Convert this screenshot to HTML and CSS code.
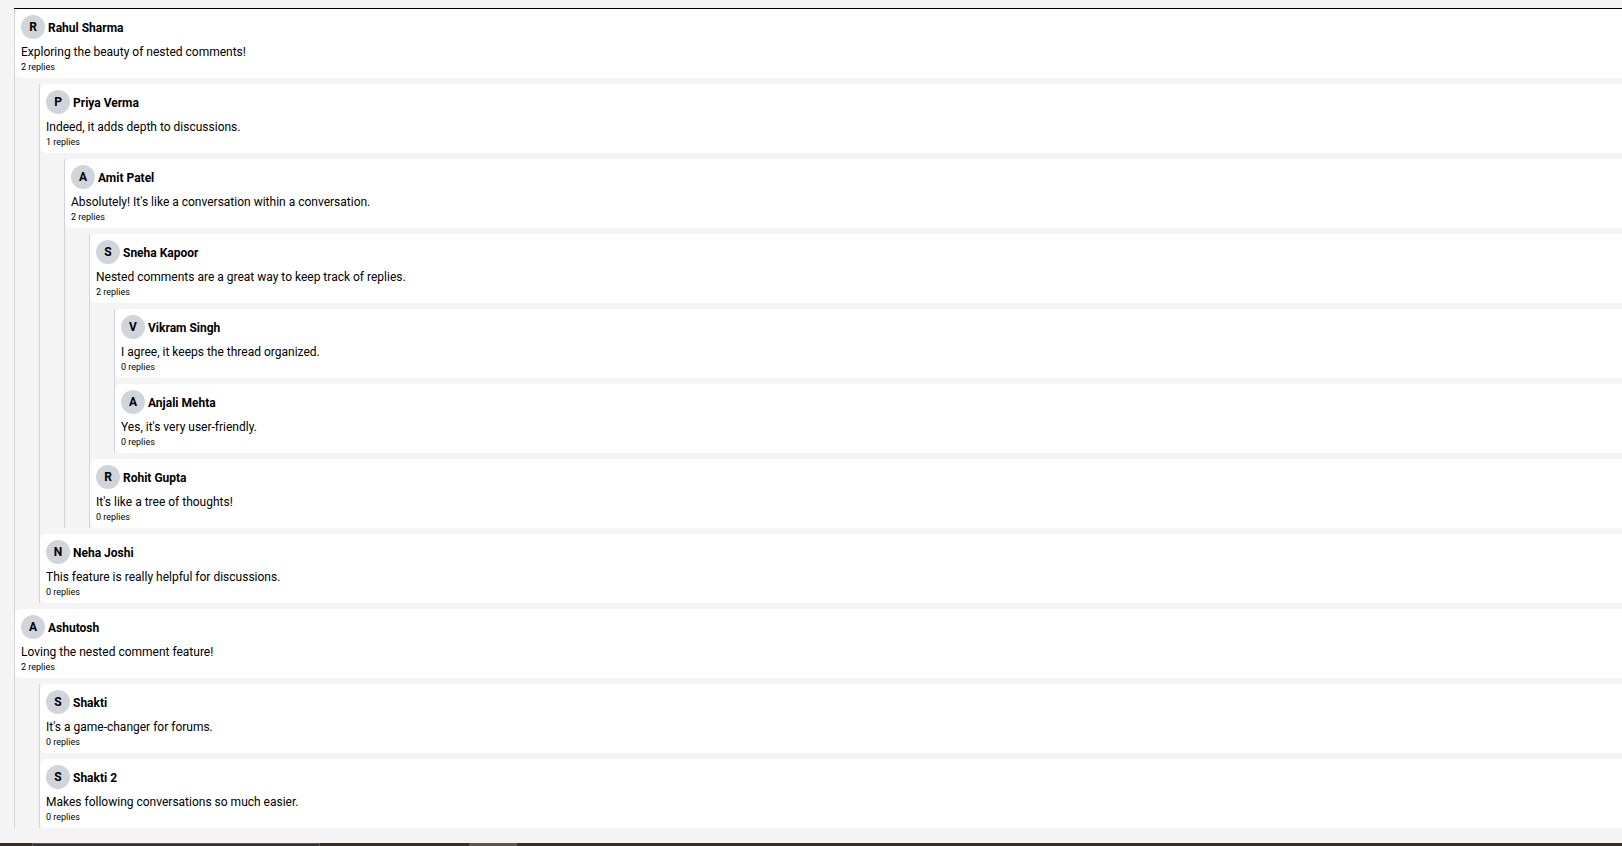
FILE: index.html
```
<!DOCTYPE html>
<html lang="en">

<head>
    <meta charset="UTF-8">
    <meta name="viewport" content="width=device-width, initial-scale=1.0">
    <title>Nested Comments</title>
    <link rel="stylesheet" href="styles.css">
</head>

<body>

    <main class="comments" id="comments"></main>

    <div class="taskbar">
        <div class="taskbar-search"></div>
        <div class="taskbar-active"></div>
    </div>

    <script src="script.js"></script>
</body>

</html>
```

FILE: styles.css
```
/* Basic styling */
* {
    box-sizing: border-box;
}

body {
    display: flex;
    flex-direction: column;
    min-height: 100vh;
    margin: 0;
    font-family: "Segoe UI", Roboto, "Open Sans", sans-serif;
    font-size: 12px;
    line-height: 18px;
    color: #000;
    background-color: #f4f4f4;
}

p {
    margin: 0;
}

.comments {
    margin: 8px 0 12px 14px;
    border-top: 1px solid #000;
}

/* Comment tree */
.thread {
    display: flex;
    flex-direction: column;
    gap: 6px;
    margin: 0;
    padding: 0;
    list-style: none;
    border-left: 1px solid #d1d5db;
}

.thread .thread {
    margin: 6px 0 0 24px;
}

.card {
    padding: 6px 6px 5px;
    border-radius: 6px 0 0 6px;
    background-color: #fff;
}

.card-header {
    display: flex;
    align-items: center;
    gap: 3px;
    margin-bottom: 4px;
    font-weight: bold;
}

.avatar {
    width: 24px;
    border-radius: 50%;
    line-height: 24px;
    text-align: center;
    background-color: #d1d5db;
}

.name {
    padding-top: 1px;
}

.replies {
    font-size: 9px;
    line-height: 12px;
}

/* Taskbar */
.taskbar {
    display: flex;
    height: 3px;
    margin-top: auto;
    background-color: #382d27;
}

.taskbar-search {
    width: 288px;
    margin-left: 32px;
    border: 1px solid #5c5753;
    border-bottom: none;
    background-color: #35302d;
}

.taskbar-active {
    width: 48px;
    margin-left: 149px;
    background-color: #5e544e;
}
```

FILE: script.js
```
const comments = [
    {
        name: 'Rahul Sharma', text: 'Exploring the beauty of nested comments!', replies: [
            {
                name: 'Priya Verma', text: 'Indeed, it adds depth to discussions.', replies: [
                    {
                        name: 'Amit Patel', text: "Absolutely! It's like a conversation within a conversation.", replies: [
                            {
                                name: 'Sneha Kapoor', text: 'Nested comments are a great way to keep track of replies.', replies: [
                                    { name: 'Vikram Singh', text: 'I agree, it keeps the thread organized.', replies: [] },
                                    { name: 'Anjali Mehta', text: "Yes, it's very user-friendly.", replies: [] }
                                ]
                            },
                            { name: 'Rohit Gupta', text: "It's like a tree of thoughts!", replies: [] }
                        ]
                    }
                ]
            },
            { name: 'Neha Joshi', text: 'This feature is really helpful for discussions.', replies: [] }
        ]
    },
    {
        name: 'Ashutosh', text: 'Loving the nested comment feature!', replies: [
            { name: 'Shakti', text: "It's a game-changer for forums.", replies: [] },
            { name: 'Shakti 2', text: 'Makes following conversations so much easier.', replies: [] }
        ]
    }
];

function addElement(parent, tag, className, text) {
    const element = document.createElement(tag);
    element.className = className;
    if (text) {
        element.textContent = text;
    }
    parent.appendChild(element);
    return element;
}

// Renders a list of comments, then the replies of each one inside it
function renderThread(parent, list) {
    const thread = addElement(parent, 'ul', 'thread');

    list.forEach(comment => {
        const item = addElement(thread, 'li', 'comment');
        const card = addElement(item, 'div', 'card');
        const header = addElement(card, 'div', 'card-header');
        addElement(header, 'span', 'avatar', comment.name[0]);
        addElement(header, 'span', 'name', comment.name);
        addElement(card, 'p', 'text', comment.text);
        addElement(card, 'p', 'replies', comment.replies.length + ' replies');

        if (comment.replies.length) {
            renderThread(item, comment.replies);
        }
    });
}

renderThread(document.getElementById('comments'), comments);
```
